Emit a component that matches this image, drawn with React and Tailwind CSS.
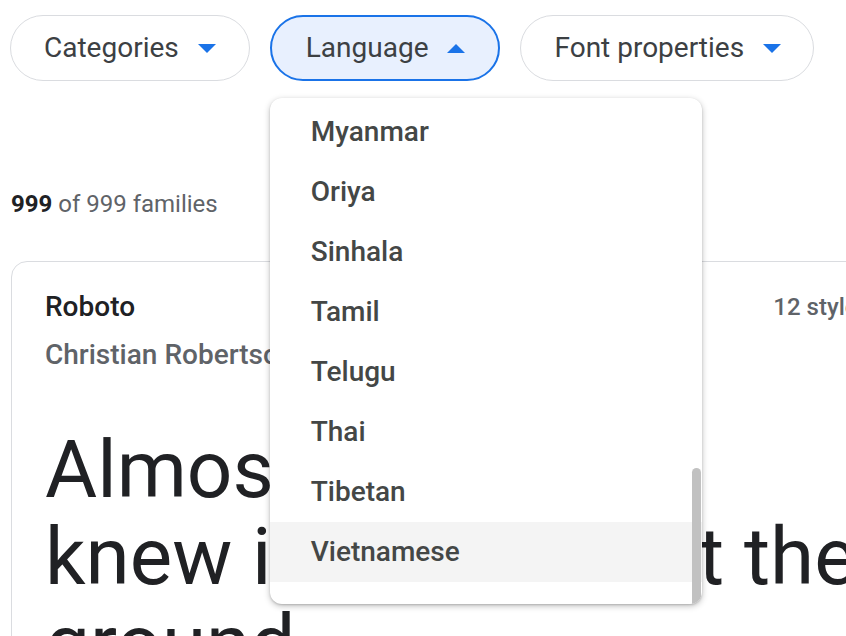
import React from "react";

const Arrow = ({ up }) => (
  <svg width="18" height="9" viewBox="0 0 18 9" className="shrink-0">
    {up ? <path d="M0 9L9 0L18 9Z" fill="#1a73e8" /> : <path d="M0 0L9 9L18 0Z" fill="#1a73e8" />}
  </svg>
);

const langs = ["Myanmar", "Oriya", "Sinhala", "Tamil", "Telugu", "Thai", "Tibetan", "Vietnamese"];

export default function App() {
  return (
    <div className="w-[846px] h-[636px] overflow-hidden bg-white relative" style={{ fontFamily: "Roboto, 'Liberation Sans', sans-serif" }}>
      <div className="flex gap-[20px] pl-[10px] pt-[15px]">
        <button className="h-[66px] rounded-full border border-[#dadce0] bg-white flex items-center pl-[33px] pr-[33px] gap-[19px] text-[28px] text-[#3c4043]">
          <span>Categories</span>
          <Arrow />
        </button>
        <div className="relative">
          <button className="h-[66px] rounded-full border-2 border-[#1a73e8] bg-[#e8f0fe] flex items-center pl-[34px] pr-[33px] gap-[19px] text-[28px] text-[#3c4043]">
            <span>Language</span>
            <Arrow up />
          </button>
          <div className="absolute left-0 top-[83px] w-[432px] h-[506px] bg-white rounded-[12px] shadow-[0_2px_6px_rgba(0,0,0,0.25),0_1px_2px_rgba(0,0,0,0.15)] overflow-hidden z-10">
            <div className="pt-[4px]">
              {langs.map((l) => (
                <div
                  key={l}
                  className={
                    "h-[60px] flex items-center pl-[41px] text-[28px] font-medium text-[#444746] " +
                    (l === "Vietnamese" ? "bg-[#f4f4f4]" : "")
                  }
                >
                  {l}
                </div>
              ))}
            </div>
            <div className="absolute right-[1px] top-[370px] w-[9px] h-[136px] rounded-t-[5px] bg-[#c1c1c1]" />
          </div>
        </div>
        <button className="h-[66px] rounded-full border border-[#dadce0] bg-white flex items-center pl-[33px] pr-[32px] gap-[19px] text-[28px] text-[#3c4043]">
          <span>Font properties</span>
          <Arrow />
        </button>
      </div>

      <div className="pl-[11px] mt-[107px] text-[24px] leading-[32px] text-[#5f6368]">
        <span className="font-bold text-[#202124]">999</span> of 999 families
      </div>

      <div className="ml-[11px] mt-[41px] w-[893px] h-[500px] border border-[#dadce0] rounded-[16px] pl-[33px] pr-[33px] pt-[28px]">
        <div className="flex justify-between items-center">
          <div className="text-[28px] leading-[34px] font-medium text-[#202124]">Roboto</div>
          <div className="text-[24px] leading-[34px] font-medium text-[#5f6368]">12 styles</div>
        </div>
        <div className="mt-[14px] text-[28px] leading-[34px] font-medium text-[#5f6368]">Christian Robertson</div>
        <div className="mt-[55px] text-[80px] leading-[87px] text-[#202124] whitespace-nowrap">
          Almost before we
          <br />
          knew it, we had left the
          <br />
          ground.
        </div>
      </div>
    </div>
  );
}
